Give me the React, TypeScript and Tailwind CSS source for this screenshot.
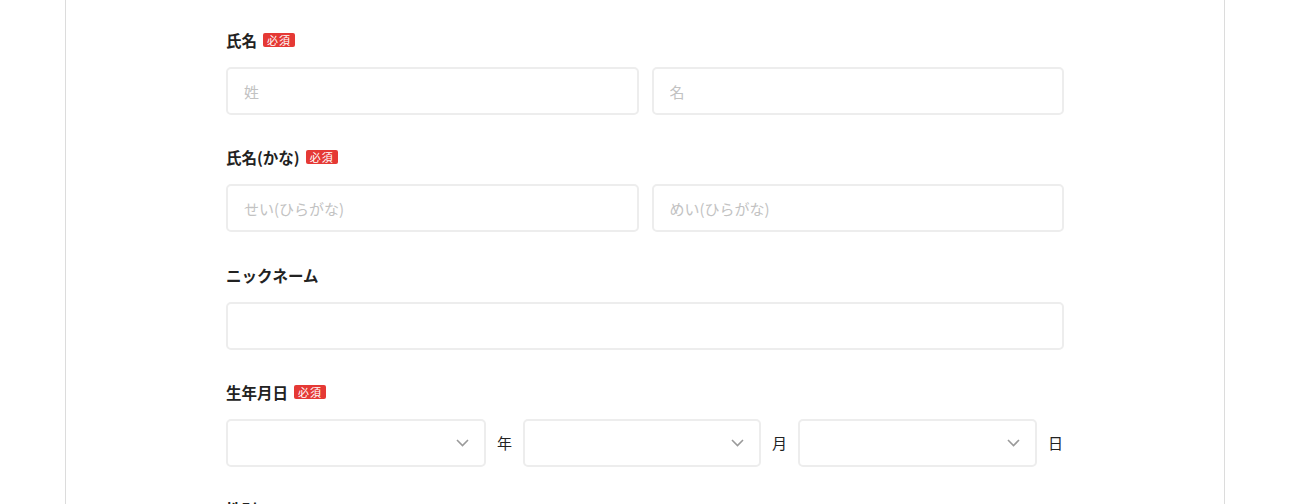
import React from 'react';

const Badge = () => (
  <span className="ml-[6px] inline-flex h-[14px] w-[32px] items-center justify-center rounded-[2px] bg-[#e53935] text-[11px] font-normal leading-none tracking-[1px] text-white">
    必須
  </span>
);

const Label = ({ text, required }: { text: string; required?: boolean }) => (
  <div className="flex h-[24px] items-center text-[15.5px] font-bold leading-[24px] text-[#222]">
    <span>{text}</span>
    {required && <Badge />}
  </div>
);

const Input = ({ placeholder }: { placeholder?: string }) => (
  <input
    placeholder={placeholder}
    className="h-[48px] w-full rounded-[5px] border-2 border-[#ededed] bg-white pl-[16px] text-[15px] text-[#222] outline-none placeholder:text-[#c2c2c2]"
  />
);

const Select = ({ width }: { width: string }) => (
  <div className={`relative flex h-[48px] shrink-0 items-center justify-end rounded-[5px] border-2 border-[#ededed] bg-white pr-[15px] ${width}`}>
    <svg width="13" height="8" viewBox="0 0 13 8" fill="none">
      <path d="M1 1l5.5 5.5L12 1" stroke="#9a9a9a" strokeWidth="1.6" />
    </svg>
  </div>
);

export default function App() {
  return (
    <div
      className="flex h-[504px] w-full justify-center overflow-hidden bg-white"
      style={{ fontFamily: '"Noto Sans CJK JP", "Noto Sans", sans-serif' }}
    >
      <div className="w-[1160px] shrink-0 border-x border-[#dcdcdc] pt-[28px]">
        <div className="ml-[160px] flex w-[838px] flex-col">
          {/* 氏名 */}
          <Label text="氏名" required />
          <div className="mt-[15px] grid grid-cols-2 gap-[13px]">
            <Input placeholder="姓" />
            <Input placeholder="名" />
          </div>

          {/* 氏名(かな) */}
          <div className="mt-[30px]">
            <Label text="氏名(かな)" required />
          </div>
          <div className="mt-[15px] grid grid-cols-2 gap-[13px]">
            <Input placeholder="せい(ひらがな)" />
            <Input placeholder="めい(ひらがな)" />
          </div>

          {/* ニックネーム */}
          <div className="mt-[31px]">
            <Label text="ニックネーム" />
          </div>
          <div className="mt-[15px]">
            <Input />
          </div>

          {/* 生年月日 */}
          <div className="mt-[30px]">
            <Label text="生年月日" required />
          </div>
          <div className="mt-[15px] flex items-center gap-[11px] text-[15px] text-[#222]">
            <Select width="w-[260px]" />
            <span>年</span>
            <Select width="w-[238px]" />
            <span>月</span>
            <Select width="w-[239px]" />
            <span>日</span>
          </div>

          {/* 性別 */}
          <div className="mt-[30px]">
            <Label text="性別" />
          </div>
        </div>
      </div>
    </div>
  );
}
